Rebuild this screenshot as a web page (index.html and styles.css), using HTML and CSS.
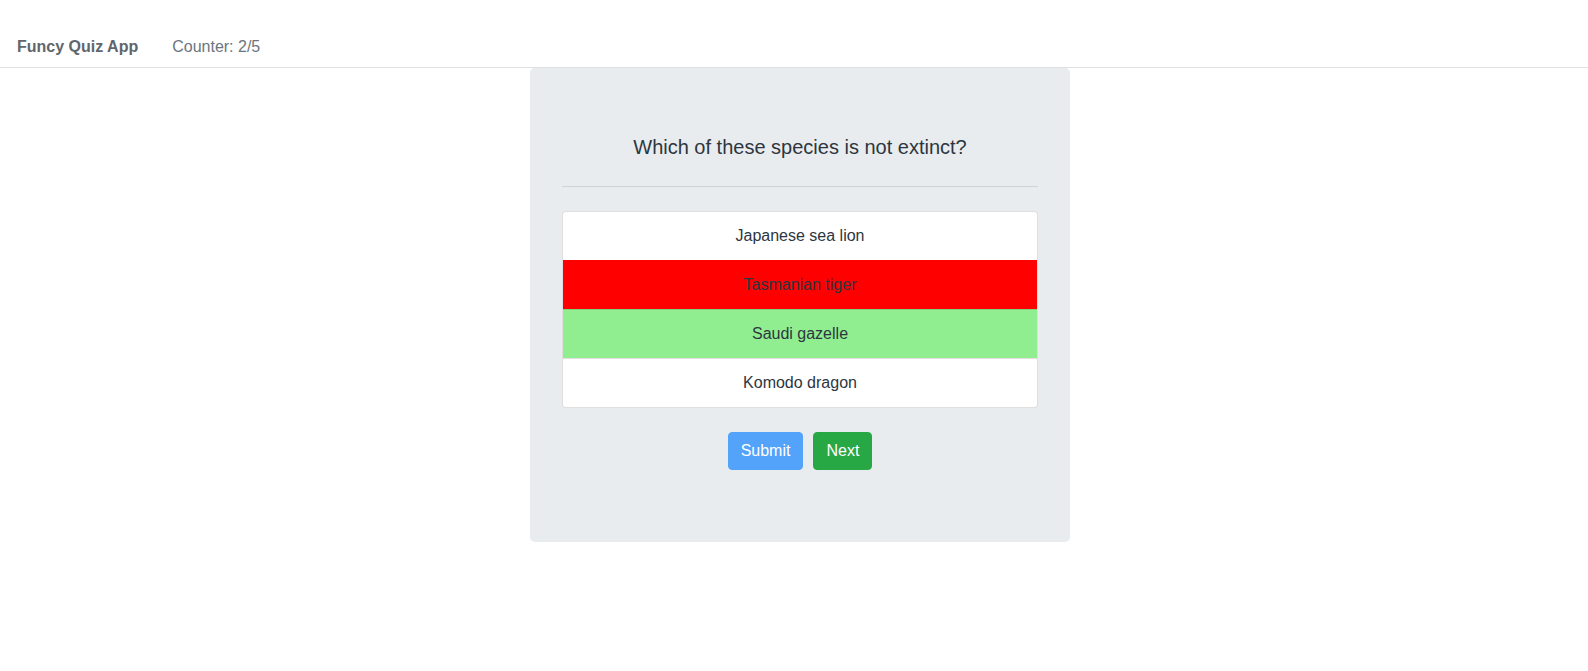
FILE: index.html
```html
<!DOCTYPE html>
<html lang="en">
<head>
<meta charset="utf-8">
<title>Funcy Quiz App</title>
<link rel="stylesheet" href="styles.css">
</head>
<body>
  <nav class="navbar">
    <span class="brand">Funcy Quiz App</span>
    <span class="counter">Counter: 2/5</span>
  </nav>
  <main class="page">
    <section class="jumbotron">
      <p class="question">Which of these species is not extinct?</p>
      <hr class="divider">
      <ul class="answers">
        <li class="answer">Japanese sea lion</li>
        <li class="answer answer-wrong">Tasmanian tiger</li>
        <li class="answer answer-right">Saudi gazelle</li>
        <li class="answer">Komodo dragon</li>
      </ul>
      <div class="actions">
        <button class="btn btn-submit" disabled>Submit</button>
        <button class="btn btn-next">Next</button>
      </div>
    </section>
  </main>
</body>
</html>
```
FILE: styles.css
```css
* { box-sizing: border-box; }

html, body {
  margin: 0;
  padding: 0;
  background: #fff;
  font-family: "Liberation Sans", Arial, sans-serif;
  font-size: 16px;
  line-height: 1.5;
  color: #212529;
}

.navbar {
  display: flex;
  align-items: center;
  height: 68px;
  padding: 35px 16px 8px 17px;
  border-bottom: 1px solid #dfe1e3;
}

.brand {
  font-weight: bold;
  color: #60666c;
  margin-right: 34px;
}

.counter {
  color: #6c757d;
}

.page {
  display: flex;
  justify-content: center;
  padding-left: 12px;
}

.jumbotron {
  width: 540px;
  background: #e9ecef;
  border-radius: 4.8px;
  padding: 64px 32px 72px 32px;
}

.question {
  margin: 0;
  font-size: 20px;
  line-height: 30px;
  text-align: center;
  color: #2d3640;
}

.divider {
  margin: 24px 0;
  border: 0;
  border-top: 1px solid rgba(0, 0, 0, 0.1);
  height: 0;
}

.answers {
  list-style: none;
  margin: 0;
  padding: 0;
  border: 1px solid rgba(0, 0, 0, 0.125);
  border-radius: 4px;
  overflow: hidden;
  background: #fff;
}

.answer {
  padding: 12px 20px;
  text-align: center;
  line-height: 24px;
  color: #2d3640;
  border-top: 1px solid rgba(0, 0, 0, 0.125);
}

.answer:first-child {
  border-top: 0;
}

.answer-wrong {
  background: #ff0000;
  border-top-color: #ff0000;
}

.answer-right {
  background: #90ee90;
  border-top-color: #7fd47f;
}

.actions {
  display: flex;
  justify-content: center;
  gap: 10px;
  margin-top: 24px;
}

.btn {
  font-family: inherit;
  font-size: 16px;
  line-height: 24px;
  padding: 6px 12px;
  border: 1px solid transparent;
  border-radius: 4px;
  color: #fff;
  cursor: pointer;
}

.btn-submit {
  background: #53a3fa;
  border-color: #53a3fa;
  cursor: default;
}

.btn-next {
  background: #28a745;
  border-color: #28a745;
}
```
